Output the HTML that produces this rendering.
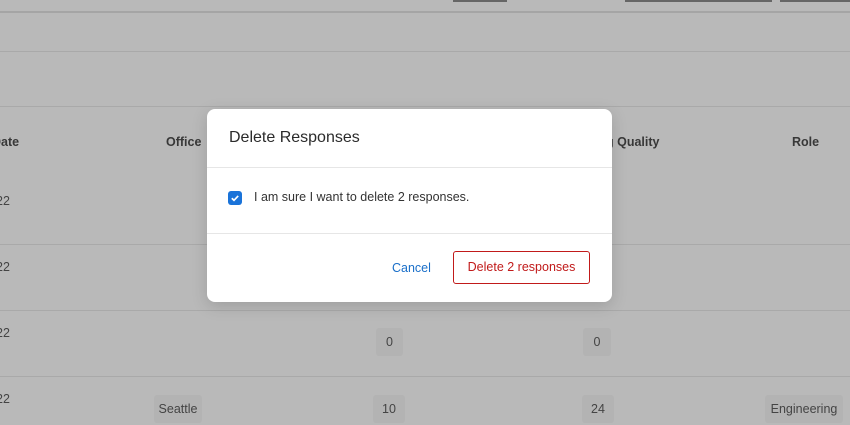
<!DOCTYPE html>
<html><head><style>
body{margin:0;width:850px;height:425px;overflow:hidden;background:#b9b9b9;font-family:"Liberation Sans",sans-serif;position:relative}
.a{position:absolute}
.l{position:absolute;left:0;width:850px;height:1px;background:#a9a9a9}
.t{position:absolute;font-size:12.5px;color:#444}
.h{position:absolute;font-size:12.5px;font-weight:bold;color:#383838}
.b{position:absolute;background:#b3b3b3;font-size:12.5px;color:#444;text-align:center;line-height:28px;height:28px;border-radius:3px}
</style></head><body>
<div class="a" style="left:453px;top:0;width:54px;height:2px;background:#666"></div>
<div class="a" style="left:625px;top:0;width:147px;height:2px;background:#666"></div>
<div class="a" style="left:780px;top:0;width:70px;height:2px;background:#666"></div>
<div class="l" style="top:11px;height:2px;background:#a5a5a5"></div>
<div class="l" style="top:51px"></div>
<div class="l" style="top:106px"></div>
<div class="l" style="top:244px"></div>
<div class="l" style="top:310px"></div>
<div class="l" style="top:376px"></div>
<div class="h" style="left:-8px;top:135px">Date</div>
<div class="h" style="left:166px;top:135px">Office</div>
<div class="h" style="left:606px;top:135px">g Quality</div>
<div class="h" style="left:792px;top:135px">Role</div>
<div class="t" style="left:-4px;top:194px">22</div>
<div class="t" style="left:-4px;top:260px">22</div>
<div class="t" style="left:-4px;top:326px">22</div>
<div class="t" style="left:-4px;top:392px">22</div>
<div class="b" style="left:376px;top:328px;width:27px">0</div>
<div class="b" style="left:583px;top:328px;width:28px">0</div>
<div class="b" style="left:154px;top:395px;width:48px">Seattle</div>
<div class="b" style="left:373px;top:395px;width:32px">10</div>
<div class="b" style="left:582px;top:395px;width:32px">24</div>
<div class="b" style="left:765px;top:395px;width:78px">Engineering</div>
<div class="a" style="left:207px;top:109px;width:405px;height:193px;background:#fff;border-radius:8px;box-shadow:0 4px 16px rgba(0,0,0,.15)">
 <div class="a" style="left:22px;top:20px;font-size:16px;color:#2b2b2b">Delete Responses</div>
 <div class="a" style="left:0;top:58px;width:405px;height:1px;background:#e6e6e6"></div>
 <div class="a" style="left:21px;top:82px;width:14px;height:14px;background:#1a73d9;border-radius:3px">
  <svg width="14" height="14" viewBox="0 0 14 14"><path d="M3.8 7.2l2.2 2.1 4.2-4.4" fill="none" stroke="#fff" stroke-width="1.7"/></svg></div>
 <div class="a" style="left:47px;top:81px;font-size:12.5px;color:#333">I am sure I want to delete 2 responses.</div>
 <div class="a" style="left:0;top:124px;width:405px;height:1px;background:#e6e6e6"></div>
 <div class="a" style="left:185px;top:152px;font-size:12.5px;color:#1a6fc9">Cancel</div>
 <div class="a" style="left:246px;top:142px;width:135px;height:31px;border:1px solid #c11a1a;border-radius:3px;color:#c11a1a;font-size:12.5px;text-align:center;line-height:31px">Delete 2 responses</div>
</div>
</body></html>
